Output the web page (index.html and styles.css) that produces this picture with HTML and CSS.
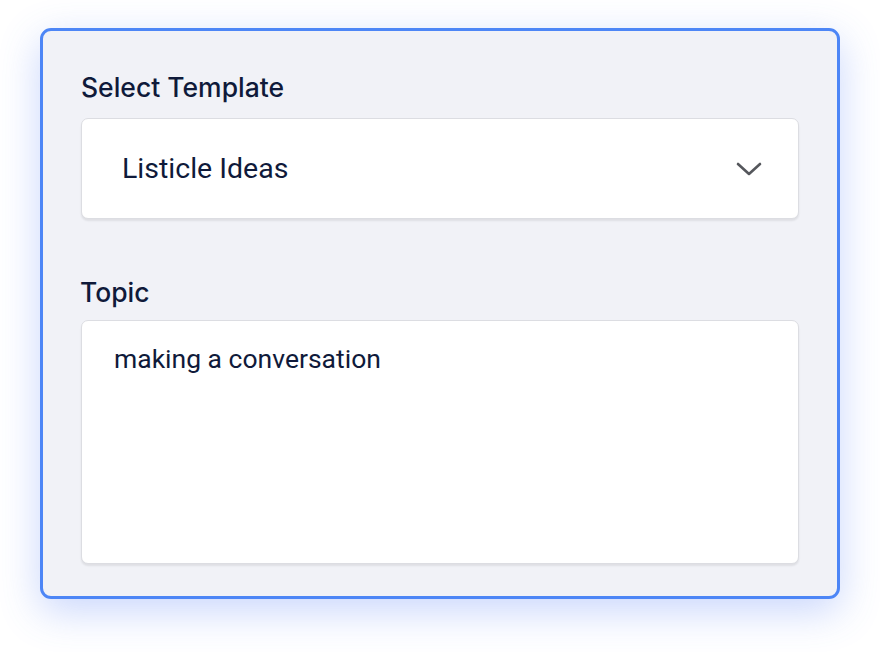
FILE: index.html
```html
<!DOCTYPE html>
<html lang="en">
<head>
    <meta charset="UTF-8">
    <meta name="viewport" content="width=device-width, initial-scale=1.0">
    <title>Template form</title>
    <link rel="stylesheet" href="styles.css">
</head>
<body>
    <form class="card">
        <label class="label" for="template">Select Template</label>
        <div class="select" id="template">
            <span class="select-value">Listicle Ideas</span>
            <svg class="chevron" width="26" height="16" viewBox="0 0 26 16">
                <path d="M2 3 L13 13 L24 3" fill="none" stroke="#55575c" stroke-width="2.6" stroke-linecap="round" stroke-linejoin="round"/>
            </svg>
        </div>
        <label class="label topic-label" for="topic">Topic</label>
        <div class="textarea" id="topic">making a conversation</div>
    </form>
</body>
</html>
```

FILE: styles.css
```css
html, body{
  height: 100%;
}
body{
  margin: 0;
  background: #ffffff;
  font-family: 'Roboto', sans-serif;
  color: #0f1a3a;
}
.card{
  box-sizing: border-box;
  width: 800px;
  height: 571px;
  margin: 28px 0 0 40px;
  padding: 40px 38px 0 38px;
  background: #f1f2f7;
  border: 3px solid #4d86f6;
  border-radius: 11px;
  box-shadow: 0 12px 40px rgba(77, 120, 246, 0.3);
  display: flex;
  flex-direction: column;
}
.label{
  font-family: 'Inter', sans-serif;
  font-weight: 500;
  font-size: 26.5px;
  line-height: 32px;
  margin-bottom: 15px;
}
.topic-label{
  margin-top: 57px;
  margin-bottom: 12px;
  margin-left: -1px;
}
.select{
  box-sizing: border-box;
  height: 101px;
  background: #ffffff;
  border: 1px solid #dcdde2;
  border-radius: 7px;
  box-shadow: 0 2px 2px rgba(0, 0, 0, 0.08);
  display: flex;
  align-items: center;
  justify-content: space-between;
  padding: 0 36px 0 40px;
  font-size: 28.5px;
}
.textarea{
  box-sizing: border-box;
  height: 244px;
  background: #ffffff;
  border: 1px solid #dcdde2;
  border-radius: 7px;
  box-shadow: 0 2px 2px rgba(0, 0, 0, 0.08);
  padding: 22px 32px;
  font-size: 26.5px;
}
```
